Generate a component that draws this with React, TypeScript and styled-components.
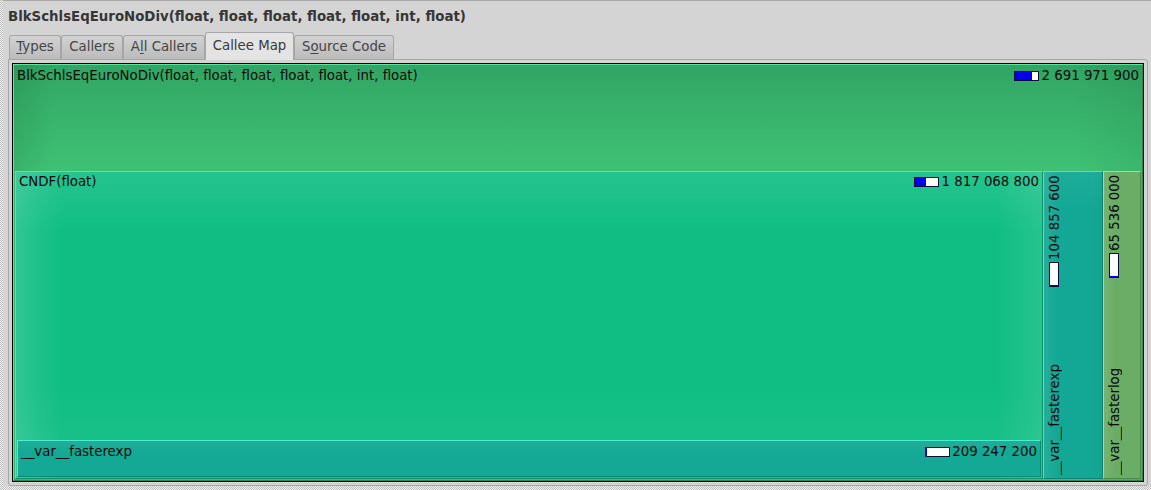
import React from "react";
import styled, { createGlobalStyle } from "styled-components";

const GlobalStyle = createGlobalStyle`
  html, body { margin: 0; padding: 0; background: #d4d4d4; }
  body { font-family: "DejaVu Sans", "Liberation Sans", sans-serif; }
`;

type Tone = { bg: string; light: string; dark: string };

const FONT = "13.33px";

const tones: Record<string, Tone> = {
  outer: {
    bg: `linear-gradient(to right, rgba(0,50,10,0.10) 0px, rgba(0,50,10,0) 40px, rgba(0,50,10,0) calc(100% - 70px), rgba(0,50,10,0.07) 100%),
         linear-gradient(to bottom, #30a564 0px, #35ae69 30px, #3cbc72 85px, #3fc175 106px, #3fc175 100%)`,
    light: "#5fe39e",
    dark: "#238a52",
  },
  cndf: {
    bg: `linear-gradient(to right, rgba(255,255,255,0.13) 0px, rgba(255,255,255,0.05) 25px, rgba(255,255,255,0) 45px, rgba(255,255,255,0) calc(100% - 45px), rgba(255,255,255,0.09) 100%),
         linear-gradient(to bottom, rgba(255,255,255,0.09) 0px, rgba(255,255,255,0) 60px, rgba(255,255,255,0) calc(100% - 90px), rgba(255,255,255,0.06) 100%),
         #10be83`,
    light: "#45eeaf",
    dark: "#0b9466",
  },
  expInner: {
    bg: `linear-gradient(to bottom, rgba(255,255,255,0.06) 0px, rgba(255,255,255,0) 12px, rgba(0,0,0,0) 100%),
         #13a994`,
    light: "#4aeed2",
    dark: "#0c8a78",
  },
  expCol: {
    bg: `linear-gradient(to right, rgba(255,255,255,0.08) 0px, rgba(255,255,255,0) 14px, rgba(0,0,0,0) calc(100% - 10px), rgba(0,0,0,0.03) 100%),
         linear-gradient(to bottom, rgba(255,255,255,0.05) 0px, rgba(255,255,255,0) 40px),
         #12a895`,
    light: "#42e6c8",
    dark: "#0b8474",
  },
  logCol: {
    bg: `linear-gradient(to right, rgba(255,255,255,0.08) 0px, rgba(255,255,255,0) 10px),
         #6bad67`,
    light: "#a4dc96",
    dark: "#4b8a48",
  },
};

const Window = styled.div`
  width: 1151px;
  height: 490px;
  overflow: hidden;
  background: repeating-conic-gradient(#f2f2f2 0 25%, #bdbdbd 0 50%) 0 0 / 2px 2px;
`;

const Surface = styled.div`
  box-sizing: border-box;
  margin-left: 3px;
  height: 486px;
  padding-left: 5px;
  background: #d4d4d4;
  border-top: 1px solid #a9a9a9;
  display: flex;
  flex-direction: column;
`;

const Title = styled.div`
  margin-top: 8px;
  height: 16px;
  line-height: 16px;
  font-size: ${FONT};
  font-weight: bold;
  color: #363636;
  white-space: nowrap;
`;

const TabBar = styled.div`
  display: flex;
  align-items: flex-end;
  height: 27px;
  margin-top: 7px;
  padding-left: 1px;
  position: relative;
  z-index: 1;
`;

const Tab = styled.div<{ $width: number; $active?: boolean }>`
  box-sizing: border-box;
  width: ${(p) => p.$width}px;
  height: ${(p) => (p.$active ? 28 : 24)}px;
  margin-bottom: ${(p) => (p.$active ? -1 : 0)}px;
  border: 1px solid #a6a6a6;
  border-bottom: none;
  border-radius: 3px 3px 0 0;
  background: ${(p) => (p.$active ? "#e4e4e4" : "linear-gradient(#d3d3d3, #bbbbbb)")};
  display: flex;
  align-items: center;
  justify-content: center;
  font-size: ${FONT};
  color: ${(p) => (p.$active ? "#3a3a3a" : "#454545")};
  white-space: nowrap;
  padding-bottom: ${(p) => (p.$active ? 3 : 2)}px;

  u {
    text-decoration: underline;
    text-underline-offset: 2px;
  }
`;

const Panel = styled.div`
  box-sizing: border-box;
  width: 1140px;
  height: 427px;
  border: 1px solid #a6a6a6;
  border-radius: 0 3px 3px 3px;
  padding: 3px;
  background: #d4d4d4;
`;

const MapFrame = styled.div`
  box-sizing: border-box;
  height: 419px;
  border: 1px solid #000;
  display: flex;
`;

const Node = styled.div<{ $tone: Tone }>`
  box-sizing: border-box;
  display: flex;
  flex-direction: column;
  min-width: 0;
  padding: 1px;
  border: 1px solid;
  border-color: ${(p) => `${p.$tone.light} ${p.$tone.dark} ${p.$tone.dark} ${p.$tone.light}`};
  background: ${(p) => p.$tone.bg};
`;

const RootNode = styled(Node)`
  flex: 1;
`;

const Column = styled(Node)<{ $width: number }>`
  width: ${(p) => p.$width}px;
  flex-shrink: 0;
`;

const Strip = styled(Node)<{ $height: number }>`
  height: ${(p) => p.$height}px;
  flex-shrink: 0;
`;

const ChildRow = styled.div<{ $height: number }>`
  display: flex;
  height: ${(p) => p.$height}px;
  flex-shrink: 0;
`;

const Spacer = styled.div`
  flex: 1;
`;

const Row = styled.div<{ $offset: number }>`
  display: flex;
  justify-content: space-between;
  align-items: center;
  gap: 6px;
  height: 18px;
  padding: ${(p) => p.$offset}px 2px 0;
  flex-shrink: 0;
  font-size: ${FONT};
  line-height: 18px;
  color: #080808;
  white-space: nowrap;
`;

const VRow = styled.div`
  flex: 1;
  display: flex;
  justify-content: space-between;
  align-items: flex-start;
  writing-mode: vertical-rl;
  transform: rotate(180deg);
  padding-inline: 2px;
  padding-block-start: 1px;
  font-size: ${FONT};
  line-height: 17px;
  color: #080808;
  white-space: nowrap;
`;

const VItem = styled.div`
  display: flex;
  align-items: center;
  block-size: 17px;
`;

const Name = styled.span`
  overflow: hidden;
`;

const Cost = styled.span`
  display: flex;
  align-items: center;
  gap: 2px;
`;

const Bar = styled.span`
  display: flex;
  box-sizing: border-box;
  inline-size: 25px;
  block-size: 10px;
  border: 1px solid #0b0b3c;
  background: #ffffff;
  flex-shrink: 0;
`;

const BarFill = styled.span`
  display: block;
  block-size: 100%;
  background: #0000ee;
`;

function CostBar({ fill }: { fill: number }) {
  return (
    <Bar>
      <BarFill style={{ inlineSize: `${fill * 100}%` }} />
    </Bar>
  );
}

function Label({
  name,
  cost,
  fill,
  offset = 0,
}: {
  name: string;
  cost: string;
  fill: number;
  offset?: number;
}) {
  return (
    <Row $offset={offset}>
      <Name>{name}</Name>
      <Cost>
        <CostBar fill={fill} />
        {cost}
      </Cost>
    </Row>
  );
}

function VLabel({ name, cost, fill }: { name: string; cost: string; fill: number }) {
  return (
    <VRow>
      <VItem>
        <Name>{name}</Name>
      </VItem>
      <VItem>
        <Cost>
          <CostBar fill={fill} />
          {cost}
        </Cost>
      </VItem>
    </VRow>
  );
}

const fn = "BlkSchlsEqEuroNoDiv(float, float, float, float, float, int, float)";

export default function App() {
  return (
    <>
      <GlobalStyle />
      <Window>
        <Surface>
          <Title>{fn}</Title>
          <TabBar>
            <Tab $width={52}>
              <span>
                <u>T</u>ypes
              </span>
            </Tab>
            <Tab $width={62}>Callers</Tab>
            <Tab $width={82}>
              <span>
                A<u>l</u>l Callers
              </span>
            </Tab>
            <Tab $width={89} $active>
              Callee Map
            </Tab>
            <Tab $width={100}>
              <span>
                S<u>o</u>urce Code
              </span>
            </Tab>
          </TabBar>
          <Panel>
            <MapFrame>
              <RootNode $tone={tones.outer}>
                <Label name={fn} cost="2 691 971 900" fill={0.7} offset={1} />
                <Spacer />
                <ChildRow $height={308}>
                  <Column $tone={tones.cndf} $width={1028}>
                    <Label name="CNDF(float)" cost="1 817 068 800" fill={0.45} />
                    <Spacer />
                    <Strip $tone={tones.expInner} $height={37}>
                      <Label name="__var__fasterexp" cost="209 247 200" fill={0.05} offset={1} />
                    </Strip>
                  </Column>
                  <Column $tone={tones.expCol} $width={60}>
                    <VLabel name="__var__fasterexp" cost="104 857 600" fill={0.05} />
                  </Column>
                  <Column $tone={tones.logCol} $width={38}>
                    <VLabel name="__var__fasterlog" cost="65 536 000" fill={0.04} />
                  </Column>
                </ChildRow>
              </RootNode>
            </MapFrame>
          </Panel>
        </Surface>
      </Window>
    </>
  );
}
